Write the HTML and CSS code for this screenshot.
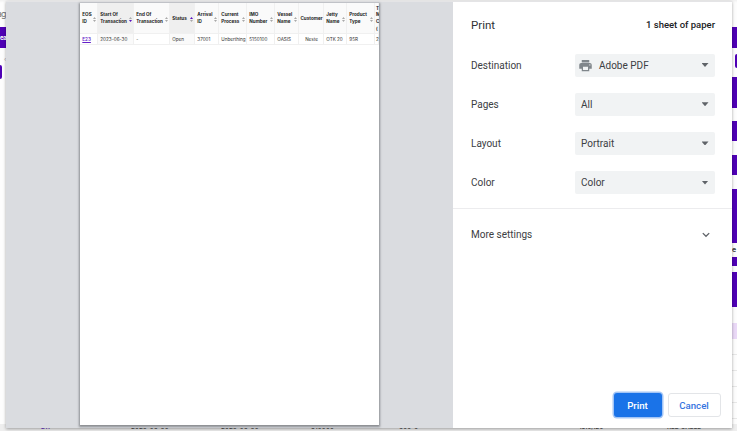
FILE: index.html
```html
<!DOCTYPE html>
<html lang="en">
<head>
<meta charset="utf-8">
<title>Print</title>
<link rel="stylesheet" href="styles.css">
</head>
<body>
<div class="backdrop">
  <div class="rail-left">
    <div class="crumb">ag</div>
    <div class="tab">ea</div>
    <div class="dot">‹</div>
    <div class="stub"></div>
  </div>
  <div class="rail-right">
    <i class="nav"></i><i class="pill"></i><i class="block b1"></i><i class="block b2"></i><i class="block b3"></i><i class="block b4"></i>
    <span class="cut">e</span>
    <i class="block b5"></i><i class="block b6"></i><i class="pale"></i>
    <i class="line"></i><i class="line"></i><i class="line"></i><i class="line"></i><i class="line"></i>
  </div>
  <div class="last-row"><span></span><span class="link">E11</span><span>2023-06-30</span><span>2023-06-30</span><span>510000</span><span>600-0</span><span>19.0/.20</span><span>RED CABLE</span></div>
</div>

<main class="dialog">
  <section class="preview">
    <div class="sheet">
      <table>
        <colgroup><col class="c1"><col class="c2"><col class="c3"><col class="c4"><col class="c5"><col class="c6"><col class="c7"><col class="c8"><col class="c9"><col class="c10"><col class="c11"><col class="c12"></colgroup>
        <thead>
          <tr>
            <th><div>EOS<br>ID<i class="sort"></i></div></th>
            <th class="on"><div>Start Of<br>Transaction<i class="sort down"></i></div></th>
            <th><div>End Of<br>Transaction<i class="sort"></i></div></th>
            <th class="on"><div>Status<i class="sort up"></i></div></th>
            <th><div>Arrival<br>ID<i class="sort"></i></div></th>
            <th><div>Current<br>Process<i class="sort"></i></div></th>
            <th><div>IMO<br>Number<i class="sort"></i></div></th>
            <th><div>Vessel<br>Name<i class="sort"></i></div></th>
            <th class="mid"><div>Customer</div></th>
            <th><div>Jetty<br>Name<i class="sort"></i></div></th>
            <th><div>Product<br>Type<i class="sort"></i></div></th>
            <th><div>T<br>M<br>C<br>(</div></th>
          </tr>
        </thead>
        <tbody>
          <tr><td class="id">E23</td><td class="on">2023-06-30</td><td>-</td><td class="on">Open</td><td>37001</td><td>Unberthing</td><td>5150100</td><td>OASIS</td><td class="mid">Neste</td><td>OTK 20</td><td>95R</td><td>2</td></tr>
        </tbody>
      </table>
    </div>
  </section>

  <aside class="settings">
    <header><h1>Print</h1><span class="count">1 sheet of paper</span></header>
    <div class="fields">
      <div class="field"><label>Destination</label><div class="select">
        <svg class="printer" viewBox="0 0 24 24"><path d="M19 8H5c-1.660 0-3 1.340-3 3v6h4v4h12v-4h4v-6c0-1.660-1.340-3-3-3zm-3 11H8v-5h8v5zm3-7c-.55 0-1-.45-1-1s.45-1 1-1 1 .45 1 1-.45 1-1 1zm-1-9H6v4h12V3z"/></svg>
        <span>Adobe PDF</span><i class="caret"></i></div></div>
      <div class="field"><label>Pages</label><div class="select"><span>All</span><i class="caret"></i></div></div>
      <div class="field"><label>Layout</label><div class="select"><span>Portrait</span><i class="caret"></i></div></div>
      <div class="field"><label>Color</label><div class="select"><span>Color</span><i class="caret"></i></div></div>
    </div>
    <div class="more"><span>More settings</span><svg viewBox="0 0 8 6"><path d="M.8 1.100 4 4.300 7.200 1.100"/></svg></div>
    <footer><button class="primary">Print</button><button>Cancel</button></footer>
  </aside>
</main>
</body>
</html>
```
FILE: styles.css
```css
* { box-sizing: border-box; }
body {
  margin: 0;
  width: 737px;
  height: 431px;
  overflow: hidden;
  position: relative;
  background: #fdfdfd;
  font-family: Roboto, "Liberation Sans", sans-serif;
}
i { font-style: normal; display: block; }

/* page behind the dialog */
.backdrop {
  height: 431px;
  display: grid;
  grid-template-columns: 8px 6px;
  grid-template-rows: 424px 7px;
  justify-content: space-between;
  background: linear-gradient(#f1f1f1 0, #fdfdfd 3px);
}
.rail-left { overflow: hidden; font-family: Inter, sans-serif; }
.crumb { margin-top: 7px; height: 20px; width: 6px; font-size: 9px; line-height: 14px; letter-spacing: -.6px; color: #777; display: flex; justify-content: flex-end; }
.tab { height: 21px; width: 6px; background: #4f00b5; color: #fff; font-size: 6px; font-weight: 700; line-height: 21px; letter-spacing: -.5px; }
.dot { height: 17px; font-size: 6px; line-height: 21px; padding-left: 4px; color: #aaa; }
.stub { width: 1.5px; height: 14px; background: #4f00b5; border-radius: 0 2px 2px 0; }
.rail-right { display: flex; flex-direction: column; padding-top: 27px; overflow: hidden; }
.rail-right > * { flex: none; }
.block, .nav { background: #4f00b5; }
.nav { height: 21px; }
.pill { height: 14px; margin: 6px 0 8px 3.5px; background: #4f00b5; border-radius: 2px 0 0 2px; }
.b1 { height: 31px; margin-top: .5px; }
.b2 { height: 20px; margin-top: 13.5px; }
.b3 { height: 20px; margin-top: 14px; }
.b4 { height: 54px; margin-top: 14px; }
.cut { height: 14px; padding-left: 1px; font: 700 7px/14px Inter, sans-serif; color: #444; }
.b5 { height: 9px; }
.b6 { height: 35px; margin-top: 6px; }
.pale { height: 16px; margin-top: 16px; background: #ead9f7; }
.line { height: 16px; border-bottom: 1px solid #e7e7e7; }
.last-row {
  grid-column: 1 / -1;
  display: grid;
  grid-template-columns: 41px 90px 90px 90px 88px 180px 88px 70px;
  background: #eee;
  font: 600 6.200px/9px Inter, sans-serif;
  color: #555;
}
.last-row span { white-space: nowrap; margin-top: -2px; }
.last-row .link { color: #6a32cc; }

.dialog {
  position: absolute;
  left: 5.5px;
  top: 1px;
  width: 726.5px;
  height: 427px;
  display: flex;
  background: #fff;
  border-top: 1px solid #e4e4e6;
  box-shadow: 0 1px 3px rgba(0, 0, 0, .35);
}
.preview { width: 447.5px; background: #dadce0; padding: 1px 0 0 74.5px; }
.sheet {
  width: 299px;
  height: 422px;
  overflow: hidden;
  background: #fff;
  box-shadow: 0 1px 2px 1px rgba(60, 64, 67, .5);
}
table {
  width: 299px;
  table-layout: fixed;
  border-collapse: separate;
  border-spacing: 0;
  font: 4.600px/6.600px Inter, sans-serif;
  color: #333;
}
.c1 { width: 18px; } .c2 { width: 36px; } .c3 { width: 36px; } .c4 { width: 25px; }
.c5 { width: 24px; } .c6 { width: 28px; } .c7 { width: 28px; } .c8 { width: 24px; }
.c9 { width: 25px; } .c10 { width: 23px; } .c11 { width: 28px; } .c12 { width: 4px; }
th, td { text-align: left; white-space: nowrap; padding: 0 0 0 2.3px; box-shadow: inset -1px -1px #f0f0f0; }
th:last-child, td:last-child { padding-left: 1px; }
th { height: 31px; padding-top: 1px; font-weight: 700; background: #fafafa; color: #222; }
td { height: 11px; padding-top: 1px; background: #fff; }
th.on { background: #efefef; }
td.on { background: #fafafa; }
th.mid, td.mid { text-align: center; padding: 1px 0 0; }
td.id { color: #6420c8; font-weight: 600; text-decoration: underline; text-decoration-thickness: .5px; }
th div { position: relative; }
.sort { position: absolute; right: 2px; top: 50%; width: 3px; height: 5px; margin-top: -2px; }
.sort::before, .sort::after { content: ""; display: block; width: 3px; height: 2px; background: #aaa; }
.sort::before { clip-path: polygon(50% 0, 100% 100%, 0 100%); }
.sort::after { margin-top: 1px; clip-path: polygon(0 0, 100% 0, 50% 100%); }
.sort.down::after, .sort.up::before { background: #5a10c0; }

.settings { flex: 1; display: flex; flex-direction: column; color: #3c4043; font-size: 10px; }
header { height: 43px; padding: 2px 17px 0 18px; display: flex; align-items: center; justify-content: space-between; }
h1 { margin: 0; font-size: 11.500px; font-weight: 400; color: #303134; }
.count { font-size: 9.500px; font-weight: 500; color: #202124; }
.fields { height: 163.500px; padding: 8.500px 17.500px 0 18px; display: flex; flex-direction: column; gap: 16.200px; border-bottom: 1px solid #ececee; }
.field { display: flex; align-items: center; height: 23px; flex: none; }
.field label { width: 104px; }
.select { flex: 1; height: 23px; border-radius: 2px; background: #f1f3f4; display: flex; align-items: center; padding: 0 6px; }
.printer { width: 15px; height: 15px; fill: #80868b; margin: 0 6px 0 -3px; }
.caret { margin-left: auto; width: 7px; height: 4px; background: #5f6368; clip-path: polygon(0 0, 100% 0, 50% 100%); }
.more { height: 52px; padding: 0 22px 0 18px; display: flex; align-items: center; justify-content: space-between; }
.more svg { width: 8px; height: 6px; fill: none; stroke: #5f6368; stroke-width: 1.300; }
footer { margin-top: auto; padding: 0 11.500px 11px 0; display: flex; justify-content: flex-end; gap: 6px; }
button { width: 53px; height: 24px; padding: 0; border: 1px solid #e3e5e8; border-radius: 3px; background: #fff; color: #3474e0; font: 500 9.700px Roboto, sans-serif; }
button.primary { width: 48px; border: 0; background: #1a73e8; color: #fff; box-shadow: 0 0 0 1.500px #a3c5f6; }
```
